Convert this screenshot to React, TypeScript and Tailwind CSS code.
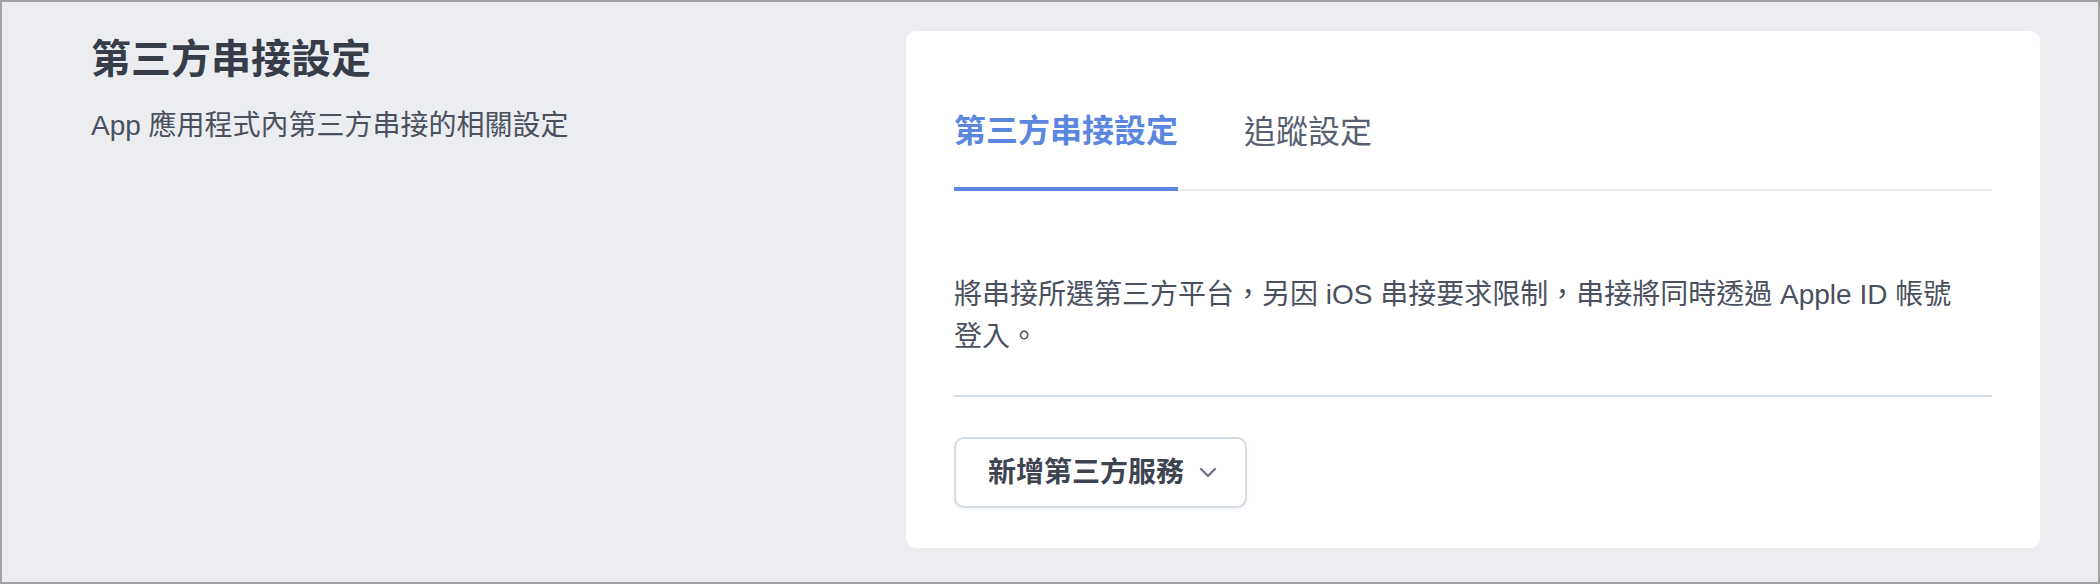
const font = "font-['Liberation_Sans','Noto_Sans_CJK_TC',sans-serif]";

const tabs = [
  { label: "第三方串接設定", active: true },
  { label: "追蹤設定", active: false },
];

function Chevron() {
  return (
    <svg width="18" height="11" viewBox="0 0 18 11" fill="none" aria-hidden="true">
      <polyline
        points="2,2 9,9 16,2"
        stroke="#6b7280"
        strokeWidth="2.2"
        strokeLinecap="round"
        strokeLinejoin="round"
      />
    </svg>
  );
}

export default function App() {
  return (
    <div
      className={`${font} h-[584px] w-[2100px] border-2 border-[#a3a3a3] bg-[#ecedf0] flex pl-[89px] pt-[29px]`}
    >
      {/* Left: section intro */}
      <div className="w-[815px] flex-none">
        <h1 className="text-[40px] leading-[56px] font-bold text-[#373c49]">
          第三方串接設定
        </h1>
        <p className="mt-[18px] text-[28px] leading-[42px] text-[#4a505d]">
          App 應用程式內第三方串接的相關設定
        </p>
      </div>

      {/* Right: settings card */}
      <div className="w-[1134px] flex-none h-[517px] rounded-[10px] bg-white px-12 pt-[76px] pb-10">
        <div className="flex gap-[66px] border-b-2 border-[#ededed]">
          {tabs.map((tab) => (
            <button
              key={tab.label}
              className={`text-[32px] leading-[48px] pb-8 ${
                tab.active
                  ? "font-bold text-[#5b87df] border-b-4 border-[#5b87df] -mb-[2px]"
                  : "text-[#575f71]"
              }`}
            >
              {tab.label}
            </button>
          ))}
        </div>

        <div className="mt-[83px] pb-[37px] border-b-2 border-[#d6dee6]">
          <p className="max-w-[1010px] text-[28px] leading-[42px] text-[#4a505d]">
            將串接所選第三方平台，另因 iOS 串接要求限制，串接將同時透過 Apple ID 帳號登入。
          </p>
        </div>

        <button className="mt-10 h-[71px] flex items-center gap-[15px] rounded-[10px] border-2 border-[#d4dce5] bg-white pl-8 pr-[28px] shadow-[0_2px_3px_rgba(0,0,0,0.05)]">
          <span className="text-[28px] leading-[42px] font-bold text-[#3f4451]">
            新增第三方服務
          </span>
          <Chevron />
        </button>
      </div>
    </div>
  );
}
